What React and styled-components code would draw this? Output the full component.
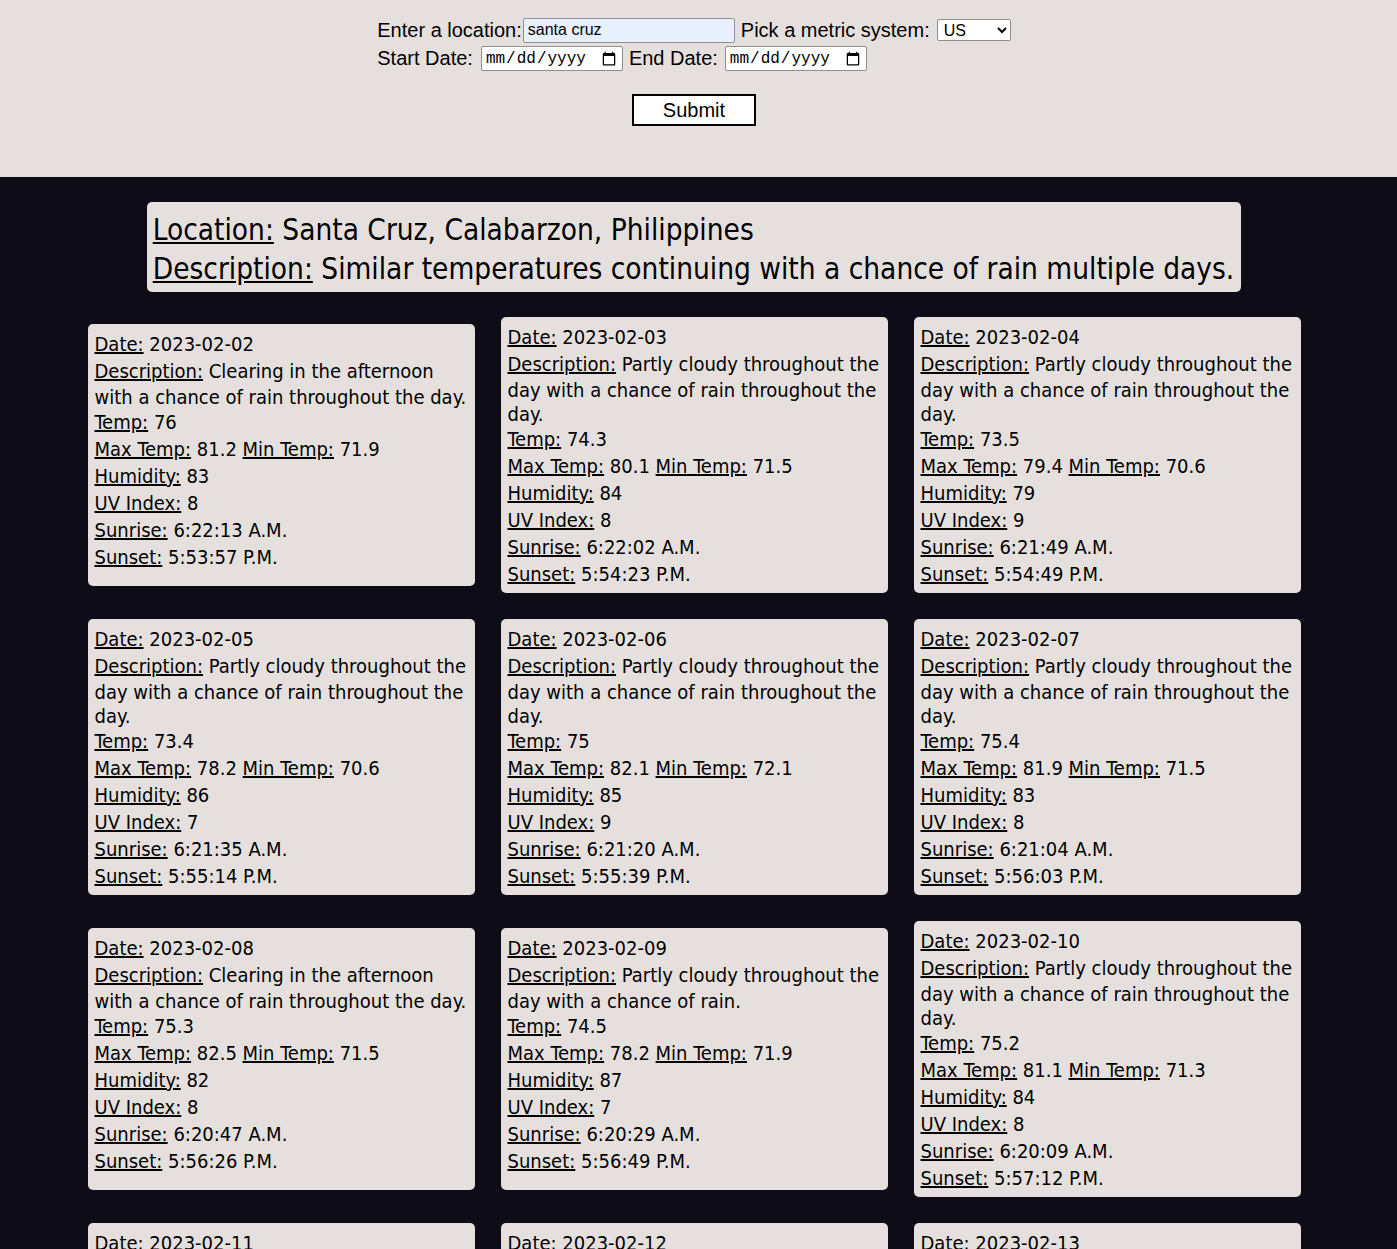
import styled, { createGlobalStyle } from "styled-components";

const days = [
  { date: "2023-02-02", desc: "Clearing in the afternoon with a chance of rain throughout the day.", temp: "76", max: "81.2", min: "71.9", humidity: "83", uv: "8", sunrise: "6:22:13 A.M.", sunset: "5:53:57 P.M." },
  { date: "2023-02-03", desc: "Partly cloudy throughout the day with a chance of rain throughout the day.", temp: "74.3", max: "80.1", min: "71.5", humidity: "84", uv: "8", sunrise: "6:22:02 A.M.", sunset: "5:54:23 P.M." },
  { date: "2023-02-04", desc: "Partly cloudy throughout the day with a chance of rain throughout the day.", temp: "73.5", max: "79.4", min: "70.6", humidity: "79", uv: "9", sunrise: "6:21:49 A.M.", sunset: "5:54:49 P.M." },
  { date: "2023-02-05", desc: "Partly cloudy throughout the day with a chance of rain throughout the day.", temp: "73.4", max: "78.2", min: "70.6", humidity: "86", uv: "7", sunrise: "6:21:35 A.M.", sunset: "5:55:14 P.M." },
  { date: "2023-02-06", desc: "Partly cloudy throughout the day with a chance of rain throughout the day.", temp: "75", max: "82.1", min: "72.1", humidity: "85", uv: "9", sunrise: "6:21:20 A.M.", sunset: "5:55:39 P.M." },
  { date: "2023-02-07", desc: "Partly cloudy throughout the day with a chance of rain throughout the day.", temp: "75.4", max: "81.9", min: "71.5", humidity: "83", uv: "8", sunrise: "6:21:04 A.M.", sunset: "5:56:03 P.M." },
  { date: "2023-02-08", desc: "Clearing in the afternoon with a chance of rain throughout the day.", temp: "75.3", max: "82.5", min: "71.5", humidity: "82", uv: "8", sunrise: "6:20:47 A.M.", sunset: "5:56:26 P.M." },
  { date: "2023-02-09", desc: "Partly cloudy throughout the day with a chance of rain.", temp: "74.5", max: "78.2", min: "71.9", humidity: "87", uv: "7", sunrise: "6:20:29 A.M.", sunset: "5:56:49 P.M." },
  { date: "2023-02-10", desc: "Partly cloudy throughout the day with a chance of rain throughout the day.", temp: "75.2", max: "81.1", min: "71.3", humidity: "84", uv: "8", sunrise: "6:20:09 A.M.", sunset: "5:57:12 P.M." },
  { date: "2023-02-11", desc: "Partly cloudy throughout the day with a chance of rain throughout the day.", temp: "75.6", max: "82.3", min: "71.8", humidity: "83", uv: "8", sunrise: "6:19:49 A.M.", sunset: "5:57:34 P.M." },
  { date: "2023-02-12", desc: "Partly cloudy throughout the day with a chance of rain throughout the day.", temp: "75.1", max: "81.6", min: "71.4", humidity: "84", uv: "8", sunrise: "6:19:27 A.M.", sunset: "5:57:56 P.M." },
  { date: "2023-02-13", desc: "Partly cloudy throughout the day with a chance of rain throughout the day.", temp: "74.8", max: "80.9", min: "71.2", humidity: "85", uv: "8", sunrise: "6:19:05 A.M.", sunset: "5:58:17 P.M." },
];

const App = () => {
  return (
    <>
      <GlobalStyle />
      <TopSection>
        <Form onSubmit={(e) => e.preventDefault()}>
          <Row $gap={6}>
            <Field $gap={1}>
              <Label>Enter a location:</Label>
              <TextInput type="text" defaultValue="santa cruz" />
            </Field>
            <Field $gap={7}>
              <Label>Pick a metric system:</Label>
              <Select defaultValue="us">
                <option value="us">US</option>
                <option value="metric">Metric</option>
              </Select>
            </Field>
          </Row>
          <Row $gap={6}>
            <Field $gap={8}>
              <Label>Start Date:</Label>
              <DateInput type="date" />
            </Field>
            <Field $gap={7}>
              <Label>End Date:</Label>
              <DateInput type="date" />
            </Field>
          </Row>
          <ButtonRow>
            <SubmitButton type="submit">Submit</SubmitButton>
          </ButtonRow>
        </Form>
      </TopSection>
      <Results>
        <Summary>
          <SummaryLine><SummaryLabel>Location:</SummaryLabel> Santa Cruz, Calabarzon, Philippines</SummaryLine>
          <SummaryLine><SummaryLabel>Description:</SummaryLabel> Similar temperatures continuing with a chance of rain multiple days.</SummaryLine>
        </Summary>
        <CardGrid>
          {days.map((day) => (
            <Card key={day.date}>
              <Line><Tag>Date:</Tag> {day.date}</Line>
              <Line><Tag>Description:</Tag> {day.desc}</Line>
              <Line><Tag>Temp:</Tag> {day.temp}</Line>
              <Line><Tag>Max Temp:</Tag> {day.max} <Tag>Min Temp:</Tag> {day.min}</Line>
              <Line><Tag>Humidity:</Tag> {day.humidity}</Line>
              <Line><Tag>UV Index:</Tag> {day.uv}</Line>
              <Line><Tag>Sunrise:</Tag> {day.sunrise}</Line>
              <Line><Tag>Sunset:</Tag> {day.sunset}</Line>
            </Card>
          ))}
        </CardGrid>
      </Results>
    </>
  );
};

export default App;

const GlobalStyle = createGlobalStyle`
  body {
    margin: 0;
    background: #0e0c17;
    font-family: "Liberation Sans", Arial, sans-serif;
  }
`

const TopSection = styled.div`
  background: #e5e0de;
  padding: 16px 9px 51px 0;
  display: flex;
  justify-content: center;
`

const Form = styled.form`
  display: flex;
  flex-direction: column;
`

const Row = styled.div`
  display: flex;
  align-items: center;
  gap: ${(p) => p.$gap}px;
  height: 28px;
`

const Field = styled.label`
  display: flex;
  align-items: center;
  gap: ${(p) => p.$gap}px;
`

const Label = styled.span`
  font-size: 20px;
  color: #000;
`

const TextInput = styled.input`
  box-sizing: border-box;
  width: 212px;
  height: 25px;
  margin: 0;
  padding: 1px 4px;
  border: 1px solid #8f8f8f;
  border-radius: 2px;
  background: #e8f0fe;
  font-family: "Liberation Sans", Arial, sans-serif;
  font-size: 16px;
  color: #000;
`

const Select = styled.select`
  box-sizing: border-box;
  width: 74px;
  height: 22px;
  margin: 0;
  padding: 0 2px;
  border: 1px solid #8f8f8f;
  border-radius: 2px;
  background: #fff;
  font-family: "Liberation Sans", Arial, sans-serif;
  font-size: 16px;
  color: #000;
`

const DateInput = styled.input`
  box-sizing: border-box;
  width: 142px;
  height: 25px;
  margin: 0;
  padding: 2px 3px 0;
  border: 1px solid #8f8f8f;
  border-radius: 2px;
  background: #fff;
  font-family: "Liberation Mono", monospace;
  font-size: 16px;
  color: #000;
`

const ButtonRow = styled.div`
  display: flex;
  justify-content: center;
  margin-top: 22px;
`

const SubmitButton = styled.button`
  box-sizing: border-box;
  width: 124px;
  height: 32px;
  border: 2px solid #000;
  background: #fff;
  font-family: "Liberation Sans", Arial, sans-serif;
  font-size: 20px;
  color: #000;
  padding: 0;
  cursor: pointer;
`

const Results = styled.div`
  padding: 25px 9px 40px 0;
  display: flex;
  flex-direction: column;
  align-items: center;
  gap: 25px;
  font-family: "DejaVu Sans Condensed", "DejaVu Sans", sans-serif;
  font-stretch: condensed;
  color: #000;
`

const Summary = styled.div`
  background: #e5e0de;
  border-radius: 5px;
  padding: 9px 7px 3px 6px;
  font-size: 29.5px;
  line-height: 39px;
`

const SummaryLine = styled.div``

const SummaryLabel = styled.u``

const CardGrid = styled.div`
  width: 1213px;
  display: flex;
  flex-wrap: wrap;
  align-items: center;
  gap: 26px;
`

const Card = styled.div`
  box-sizing: border-box;
  width: 387px;
  min-height: 262px;
  background: #e5e0de;
  border-radius: 5px;
  padding: 7px 5px 5px 7px;
  font-size: 20px;
  line-height: 24px;
`

const Line = styled.div``

const Tag = styled.u`
  display: inline-block;
  line-height: 27px;
`
